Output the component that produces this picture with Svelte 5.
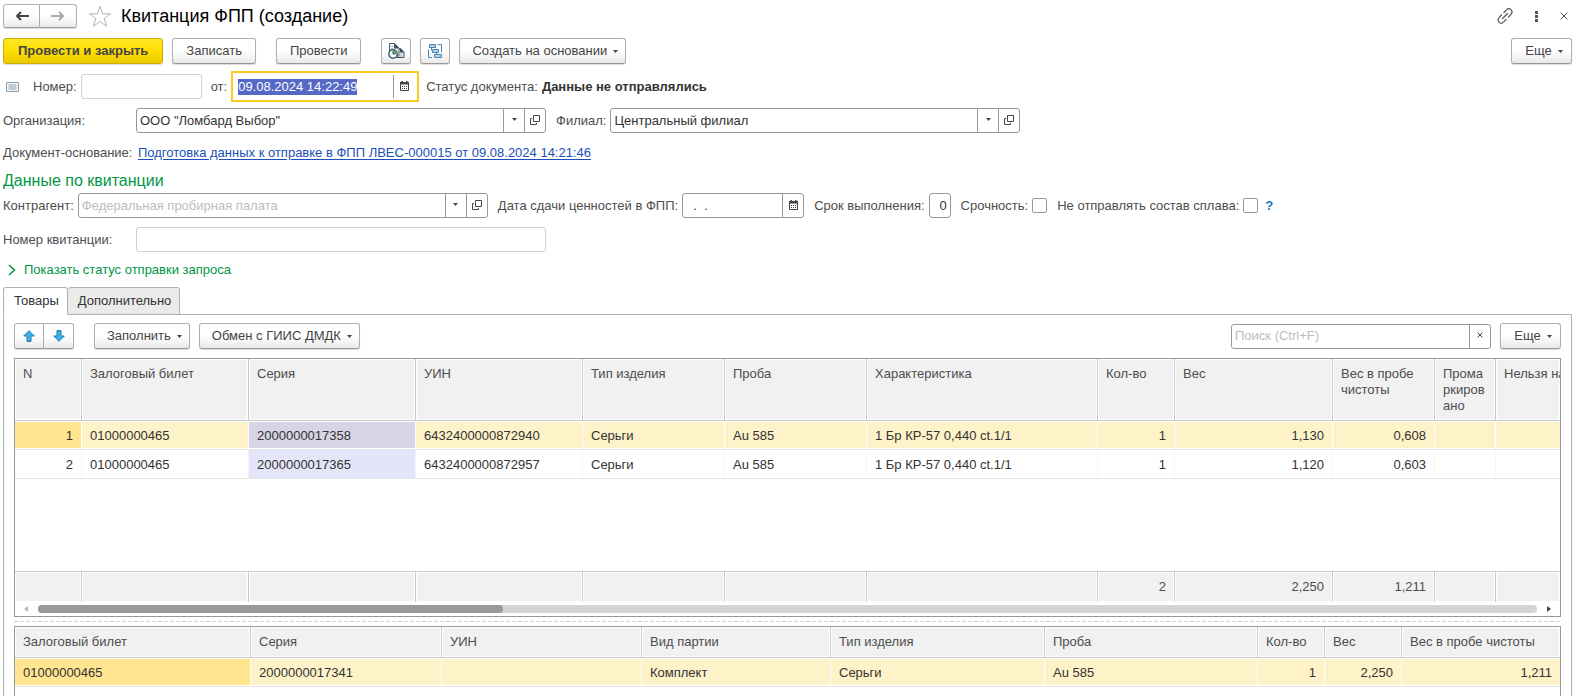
<script>
  import { onMount } from 'svelte';

  let docDate = $state('09.08.2024 14:22:49');
  let organization = $state('ООО "Ломбард Выбор"');
  let branch = $state('Центральный филиал');
  let term = $state('0');
  let activeTab = $state('goods');
  let dateInput;

  const goodsColumns = [
    { title: 'N', width: 67, num: true },
    { title: 'Залоговый билет', width: 167 },
    { title: 'Серия', width: 167 },
    { title: 'УИН', width: 167 },
    { title: 'Тип изделия', width: 142 },
    { title: 'Проба', width: 142 },
    { title: 'Характеристика', width: 231 },
    { title: 'Кол-во', width: 77, num: true },
    { title: 'Вес', width: 158, num: true },
    { title: 'Вес в пробе чистоты', width: 102, num: true },
    { title: 'Промаркировано', width: 61 },
    { title: 'Нельзя на' }
  ];

  const goods = [
    ['1', '01000000465', '2000000017358', '6432400000872940', 'Серьги', 'Au 585', '1 Бр КР-57 0,440 ct.1/1', '1', '1,130', '0,608', '', ''],
    ['2', '01000000465', '2000000017365', '6432400000872957', 'Серьги', 'Au 585', '1 Бр КР-57 0,440 ct.1/1', '1', '1,120', '0,603', '', '']
  ];

  const totals = ['', '', '', '', '', '', '', '2', '2,250', '1,211', '', ''];

  const batchColumns = [
    { title: 'Залоговый билет', width: 236 },
    { title: 'Серия', width: 191 },
    { title: 'УИН', width: 200 },
    { title: 'Вид партии', width: 189 },
    { title: 'Тип изделия', width: 214 },
    { title: 'Проба', width: 213 },
    { title: 'Кол-во', width: 67, num: true },
    { title: 'Вес', width: 77, num: true },
    { title: 'Вес в пробе чистоты', num: true }
  ];

  const batches = [
    ['01000000465', '2000000017341', '', 'Комплект', 'Серьги', 'Au 585', '1', '2,250', '1,211']
  ];

  onMount(() => {
    dateInput.focus();
    dateInput.select();
  });
</script>

{#snippet caret()}
  <svg class="caret" width="5" height="3" viewBox="0 0 5 3"><path d="M0 0h5L2.5 3z" fill="#444" /></svg>
{/snippet}

{#snippet calendar()}
  <svg width="9" height="10" viewBox="0 0 9 10">
    <path d="M.5 2h8v7.500h-8z" fill="none" stroke="#444" />
    <path d="M0 1h9v2.500H0zM1.500 0H3v1H1.500zM6 0h1.500v1H6z" fill="#444" />
    <path d="M2 5.500h5M2 7.500h5" stroke="#444" stroke-dasharray="1 1" />
  </svg>
{/snippet}

{#snippet pickers()}
  <button class="pick" aria-label="Выбрать">{@render caret()}</button>
  <button class="pick" aria-label="Открыть">
    <svg width="10" height="10" viewBox="0 0 10 10" fill="none" stroke="#444">
      <path d="M3.500.5h6v6h-6zM2 3.500H.5v6h6V8" />
    </svg>
  </button>
{/snippet}

{#snippet header(columns)}
  <colgroup>
    {#each columns as col}
      <col style:width={col.width ? `${col.width}px` : null} />
    {/each}
  </colgroup>
  <thead>
    <tr>
      {#each columns as col}
        <th scope="col">{col.title}</th>
      {/each}
    </tr>
  </thead>
{/snippet}

<main>
  <header class="titlebar">
    <div class="group">
      <button class="btn" aria-label="Назад">
        <svg width="14" height="10" viewBox="0 0 14 10" fill="none" stroke="#444" stroke-width="2"><path d="M14 5H2M6 1L2 5l4 4" /></svg>
      </button>
      <button class="btn" aria-label="Вперед">
        <svg width="14" height="10" viewBox="0 0 14 10" fill="none" stroke="#a8a8a8" stroke-width="2"><path d="M0 5h12M8 1l4 4-4 4" /></svg>
      </button>
    </div>
    <button class="plain star" aria-label="В избранное">
      <svg width="24" height="23" viewBox="0 0 24 23" fill="none" stroke="#b5b5b5"><path d="M12 1.500l2.600 7.300h7.900l-6.300 4.700 2.300 7.700-6.500-4.600-6.500 4.600 2.300-7.700L1.500 8.800h7.900z" /></svg>
    </button>
    <h1>Квитанция ФПП (создание)</h1>
    <div class="window-tools">
      <button class="plain" aria-label="Ссылка">
        <svg width="16" height="16" viewBox="0 0 16 16" fill="none" stroke="#555" stroke-width="1.200" stroke-linecap="round">
          <path d="M7 4.500l2.500-2.700a3 3 0 0 1 4.500 4.500L11.500 9M9 11.500l-2.500 2.700A3 3 0 0 1 2 9.700L4.500 7M5.500 10.500l5-5" />
        </svg>
      </button>
      <button class="plain" aria-label="Меню">
        <svg width="3" height="11" viewBox="0 0 3 11" fill="#555"><path d="M0 0h3v3H0zM0 4h3v3H0zM0 8h3v3H0z" /></svg>
      </button>
      <button class="plain" aria-label="Закрыть">
        <svg width="8" height="8" viewBox="0 0 8 8" stroke="#555"><path d="M.5.5l7 7M7.500.5l-7 7" /></svg>
      </button>
    </div>
  </header>

  <div class="toolbar">
    <button class="btn primary">Провести и закрыть</button>
    <button class="btn">Записать</button>
    <button class="btn post">Провести</button>
    <button class="btn icon post" aria-label="Движения документа">
      <svg width="17" height="16" viewBox="0 0 17 16" fill="#fff" stroke="#3f5568">
        <path d="M8.500 5.500h4l3.500 3.500v5.500H8.500z" fill="#e8edf0" />
        <path d="M12 5v4.500h4.500z" fill="#3f5568" stroke="none" />
        <path d="M1.500.5h5l4.500 4.500v8H1.500z" fill="#f3f5f6" />
        <path d="M6 0v5.500h5.500z" fill="#3f5568" stroke="none" />
        <path d="M3 3.500h2M3 5.500h2M11 11h3.500M11 13h3.500" stroke="#a9b6c0" />
        <circle cx="5" cy="11" r="4.200" stroke-width="1.400" />
        <path d="M5 11V7.800A3.200 3.200 0 0 1 8.200 11z" fill="#3cc24a" stroke="none" />
        <path d="M5 8v3h2.500" fill="none" />
      </svg>
    </button>
    <button class="btn icon" aria-label="Структура подчиненности">
      <svg width="14" height="14" viewBox="0 0 14 14" fill="#b5d0e6" stroke="#4a86b4">
        <path d="M1.500.5h6v3h-6zM4.500 5.500h6v3h-6zM6.500 10.500h7v3h-7z" />
        <path d="M9.500.5h4V8M.5 5.500v8H4M3.500 3.500v3h1M8.500 8.500v2" fill="none" />
      </svg>
    </button>
    <button class="btn menu">Создать на основании {@render caret()}</button>
    <button class="btn menu more">Еще {@render caret()}</button>
  </div>

  <div class="row number-row">
    <svg class="doc-mark" width="13" height="10" viewBox="0 0 13 10" fill="#f5f8fa" stroke="#8a9baa"><path d="M.5.5h12v9H.5zM2.500 3h8M2.500 5h8M2.500 7h8" /></svg>
    <label for="number">Номер:</label>
    <div class="field light number"><input id="number" type="text" /></div>
    <label for="date">от:</label>
    <div class="field focused date">
      <input id="date" type="text" bind:value={docDate} bind:this={dateInput} />
      <button class="pick" aria-label="Календарь">{@render calendar()}</button>
    </div>
    <span class="status">Статус документа:</span>
    <b>Данные не отправлялись</b>
  </div>

  <div class="row org-row">
    <label class="wide" for="org">Организация:</label>
    <div class="field ref">
      <input id="org" type="text" bind:value={organization} />
      {@render pickers()}
    </div>
    <label class="next" for="branch">Филиал:</label>
    <div class="field ref">
      <input id="branch" type="text" bind:value={branch} />
      {@render pickers()}
    </div>
  </div>

  <div class="row base-row">
    <span class="wide">Документ-основание:</span>
    <a href="#base">Подготовка данных к отправке в ФПП ЛВЕС-000015 от 09.08.2024 14:21:46</a>
  </div>

  <h2>Данные по квитанции</h2>

  <div class="row">
    <label for="agent">Контрагент:</label>
    <div class="field ref">
      <input id="agent" type="text" placeholder="Федеральная пробирная палата" />
      {@render pickers()}
    </div>
    <label class="next" for="handover">Дата сдачи ценностей в ФПП:</label>
    <div class="field handover">
      <input id="handover" type="text" value="  .  ." />
      <button class="pick" aria-label="Календарь">{@render calendar()}</button>
    </div>
    <label class="next" for="term">Срок выполнения:</label>
    <div class="field term"><input id="term" type="text" bind:value={term} /></div>
    <label class="next" for="urgent">Срочность:</label>
    <input id="urgent" type="checkbox" />
    <label class="next" for="alloy">Не отправлять состав сплава:</label>
    <input id="alloy" type="checkbox" />
    <button class="plain help">?</button>
  </div>

  <div class="row receipt-row">
    <label class="wide" for="receipt">Номер квитанции:</label>
    <div class="field light ref"><input id="receipt" type="text" /></div>
  </div>

  <button class="plain expander">
    <svg width="8" height="12" viewBox="0 0 8 12" fill="none" stroke="#009646" stroke-width="1.600"><path d="M1 1l5.500 5L1 11" /></svg>
    Показать статус отправки запроса
  </button>

  <div class="tabs" role="tablist">
    <button role="tab" aria-selected={activeTab === 'goods'} onclick={() => (activeTab = 'goods')}>Товары</button>
    <button role="tab" aria-selected={activeTab === 'extra'} onclick={() => (activeTab = 'extra')}>Дополнительно</button>
  </div>

  <section class="panel">
    <div class="panel-bar">
      <div class="group">
        <button class="btn" aria-label="Вверх">
          <svg width="12" height="12" viewBox="0 0 12 12" fill="#3fb0ee" stroke="#2379ad"><path d="M6 .7l5.300 5.300H8v5.500H4V6H.7z" /></svg>
        </button>
        <button class="btn" aria-label="Вниз">
          <svg width="12" height="12" viewBox="0 0 12 12" fill="#3fb0ee" stroke="#2379ad"><path d="M6 11.300L.7 6H4V.5h4V6h3.300z" /></svg>
        </button>
      </div>
      <button class="btn menu fill">Заполнить {@render caret()}</button>
      <button class="btn menu">Обмен с ГИИС ДМДК {@render caret()}</button>
      <div class="field search">
        <input type="text" aria-label="Поиск" placeholder="Поиск (Ctrl+F)" />
        <button class="pick" aria-label="Очистить">
          <svg width="6" height="6" viewBox="0 0 6 6" stroke="#444"><path d="M.5.5l5 5M5.500.5l-5 5" /></svg>
        </button>
      </div>
      <button class="btn menu">Еще {@render caret()}</button>
    </div>

    <div class="grid">
      <table class="goods">
        {@render header(goodsColumns)}
        <tbody>
          {#each goods as row, r}
            <tr class:current={r === 0}>
              {#each row as cell, c}
                <td class:num={goodsColumns[c].num} class:series={c === 2}>{cell}</td>
              {/each}
            </tr>
          {/each}
          <tr class="filler"><td colspan={goodsColumns.length}></td></tr>
        </tbody>
        <tfoot>
          <tr>
            {#each totals as cell, c}
              <td class:num={goodsColumns[c].num}>{cell}</td>
            {/each}
          </tr>
        </tfoot>
      </table>
      <div class="scroll">
        <svg width="4" height="6" viewBox="0 0 4 6"><path d="M4 0v6L0 3z" fill="#bbb" /></svg>
        <div class="track"><div class="thumb"></div></div>
        <svg width="4" height="6" viewBox="0 0 4 6"><path d="M0 0v6l4-3z" fill="#444" /></svg>
      </div>
    </div>

    <div class="splitter"></div>

    <div class="grid rest">
      <table>
        {@render header(batchColumns)}
        <tbody>
          {#each batches as row, r}
            <tr class:current={r === 0}>
              {#each row as cell, c}
                <td class:num={batchColumns[c].num}>{cell}</td>
              {/each}
            </tr>
          {/each}
        </tbody>
      </table>
    </div>
  </section>
</main>

<style>
  :global(body) {
    margin: 0;
    background: #fff;
  }
  main {
    display: flex;
    flex-direction: column;
    box-sizing: border-box;
    height: 100vh;
    padding: 0 10px 0 3px;
    overflow: hidden;
    font: 13px/16px "Liberation Sans", Arial, sans-serif;
    color: #4d4d4d;
  }
  main * {
    box-sizing: border-box;
  }
  svg {
    display: block;
    flex: none;
  }
  button,
  input {
    font: inherit;
    color: inherit;
    margin: 0;
  }
  button {
    cursor: pointer;
    white-space: nowrap;
  }
  label,
  span,
  b {
    white-space: nowrap;
  }

  .titlebar {
    display: flex;
    align-items: center;
    flex: none;
    height: 32px;
  }
  .plain {
    display: flex;
    align-items: center;
    padding: 0;
    border: none;
    background: none;
  }
  .star {
    margin: 0 9px 0 11px;
  }
  h1 {
    margin: 0;
    font-size: 18px;
    line-height: 24px;
    font-weight: normal;
    color: #000;
  }
  .window-tools {
    display: flex;
    align-items: center;
    gap: 22px;
    margin-left: auto;
    padding-right: 4px;
  }

  .btn {
    display: flex;
    align-items: center;
    justify-content: center;
    height: 26px;
    padding: 0 13px;
    border: 1px solid #b0b0b0;
    border-bottom-color: #999;
    border-radius: 3px;
    background: linear-gradient(#fff 50%, #e9e9e9);
    box-shadow: 0 1px 1px rgba(0, 0, 0, 0.15);
    color: #444;
  }
  .btn.primary {
    padding: 0 14px;
    border-color: #c9ac00;
    background: linear-gradient(#ffe726, #ffde00 50%, #e9c900);
    font-weight: bold;
  }
  .btn.menu {
    gap: 6px;
    min-width: 61px;
    padding: 0 7px 0 12px;
  }
  .btn.icon {
    width: 30px;
    padding: 0;
  }
  .group {
    display: flex;
  }
  .group .btn {
    padding: 0;
    width: 30px;
  }
  .titlebar .group .btn {
    width: 37px;
    height: 24px;
  }
  .group .btn:first-child {
    border-radius: 3px 0 0 3px;
  }
  .group .btn:last-child {
    border-left: none;
    border-radius: 0 3px 3px 0;
  }
  .toolbar {
    display: flex;
    align-items: center;
    flex: none;
    gap: 9px;
    height: 38px;
  }
  .post {
    margin-left: 11px;
  }
  .more {
    margin-left: auto;
  }

  .row {
    display: flex;
    align-items: center;
    flex: none;
    gap: 4px;
    height: 31px;
  }
  .number-row {
    height: 33px;
    padding-left: 3px;
  }
  .number-row label {
    margin-left: 5px;
  }
  .doc-mark {
    margin-right: 5px;
  }
  .status {
    margin-left: 3px;
  }
  b {
    color: #333;
  }
  .org-row {
    height: 35px;
  }
  .receipt-row {
    height: 37px;
  }
  .base-row {
    gap: 6px;
    height: 29px;
  }
  .wide {
    width: 129px;
  }
  .next {
    margin-left: 6px;
  }
  a {
    color: #1a50b8;
    text-decoration: underline;
    text-underline-offset: 2px;
  }
  h2 {
    flex: none;
    margin: 0;
    padding-top: 5px;
    font-size: 16px;
    line-height: 18px;
    font-weight: normal;
    color: #009646;
  }

  .field {
    display: flex;
    height: 25px;
    border: 1px solid #999;
    border-radius: 3px;
    background: #fff;
  }
  .field input {
    flex: 1;
    width: 100%;
    min-width: 0;
    padding: 0 3px;
    border: none;
    outline: none;
    background: none;
    color: #333;
    white-space: pre;
  }
  .field input::placeholder {
    color: #bdbdbd;
    opacity: 1;
  }
  .pick {
    display: flex;
    align-items: center;
    justify-content: center;
    flex: none;
    width: 21px;
    padding: 0 0 2px;
    border: none;
    border-left: 1px solid #999;
    background: none;
  }
  .light {
    border-color: #d0d0d0;
  }
  .number {
    width: 121px;
  }
  .date {
    width: 188px;
  }
  .focused {
    height: 31px;
    padding: 2px;
    border: 2px solid #fdcb20;
    border-radius: 0;
  }
  .focused .pick {
    width: 22px;
  }
  .focused input::selection {
    background: #5468c4;
    color: #fff;
  }
  .ref {
    width: 410px;
  }
  .handover {
    width: 122px;
  }
  .term {
    width: 22px;
  }
  .term input {
    text-align: right;
  }
  input[type='checkbox'] {
    appearance: none;
    width: 15px;
    height: 15px;
    border: 1px solid #999;
    border-radius: 2px;
    background: #fff;
  }
  .help {
    padding-left: 3px;
    color: #0a78c2;
    font-weight: bold;
  }
  .expander {
    flex: none;
    gap: 8px;
    height: 24px;
    padding-left: 5px;
    color: #009646;
  }

  .tabs {
    display: flex;
    flex: none;
    height: 28px;
    margin-top: 5px;
  }
  .tabs button {
    padding: 0 8px 0 10px;
    border: 1px solid #b0b0b0;
    border-radius: 3px 3px 0 0;
    background: #ebebeb;
    color: #333;
  }
  .tabs button + button {
    border-left: none;
  }
  .tabs button[aria-selected='true'] {
    z-index: 1;
    border-bottom-color: #fff;
    background: #fff;
  }
  .panel {
    display: flex;
    flex-direction: column;
    flex: 1;
    min-height: 0;
    margin-top: -1px;
    padding: 8px 10px 0;
    border: 1px solid #b0b0b0;
    border-bottom: none;
  }
  .panel-bar {
    display: flex;
    align-items: center;
    flex: none;
    gap: 9px;
    margin-bottom: 9px;
  }
  .fill {
    margin-left: 11px;
  }
  .search {
    width: 260px;
    margin-left: auto;
  }

  .grid {
    flex: none;
    border: 1px solid #999;
    overflow: hidden;
  }
  .rest {
    flex: 1;
    border-bottom: none;
  }
  table {
    width: 100%;
    table-layout: fixed;
    border-collapse: separate;
    border-spacing: 0;
  }
  th,
  td {
    padding: 0 8px;
    overflow: hidden;
    white-space: nowrap;
    text-align: left;
  }
  th {
    height: 31px;
    border-right: 1px solid #c8c8c8;
    border-bottom: 1px solid #c8c8c8;
    background: #f1f1f1;
    box-shadow: inset 0 0 0 1px #fff;
    font-weight: normal;
  }
  .goods th {
    height: 62px;
    padding-top: 7px;
    vertical-align: top;
    white-space: normal;
    word-break: break-word;
  }
  .goods th:last-child {
    white-space: nowrap;
    padding-right: 0;
  }
  th:last-child,
  td:last-child {
    border-right: none;
  }
  td {
    height: 29px;
    padding-top: 1px;
    border-right: 1px solid #f5f5f5;
    border-bottom: 1px solid #e4e4e4;
    color: #333;
  }
  .num {
    text-align: right;
  }
  td.series {
    background: #e4e5f9;
  }
  .current td {
    border-right-color: #fff;
    background: #fef2c8;
    box-shadow: inset 0 1px #fff, inset 0 -1px #fff;
  }
  .current td:first-child {
    background: #ffe58f;
  }
  .current td.series {
    background: #d6d5e5;
  }
  .filler td {
    height: 92px;
    border: none;
  }
  tfoot td {
    height: 31px;
    padding-top: 0;
    border-top: 1px solid #c8c8c8;
    border-right: 1px solid #c8c8c8;
    border-bottom: none;
    background: #f1f1f1;
    box-shadow: inset 0 0 0 1px #fff;
    color: #4d4d4d;
  }
  .scroll {
    display: flex;
    align-items: center;
    gap: 10px;
    height: 14px;
    padding: 0 9px;
  }
  .track {
    flex: 1;
    height: 8px;
    border-radius: 4px;
    background: #d4d4d4;
  }
  .thumb {
    width: 31%;
    height: 100%;
    border-radius: 4px;
    background: #999;
  }
  .splitter {
    flex: none;
    height: 1px;
    margin: 4px 0;
    background: repeating-linear-gradient(90deg, #d4d4d4 0 4px, #fff 4px 6px);
  }
</style>
